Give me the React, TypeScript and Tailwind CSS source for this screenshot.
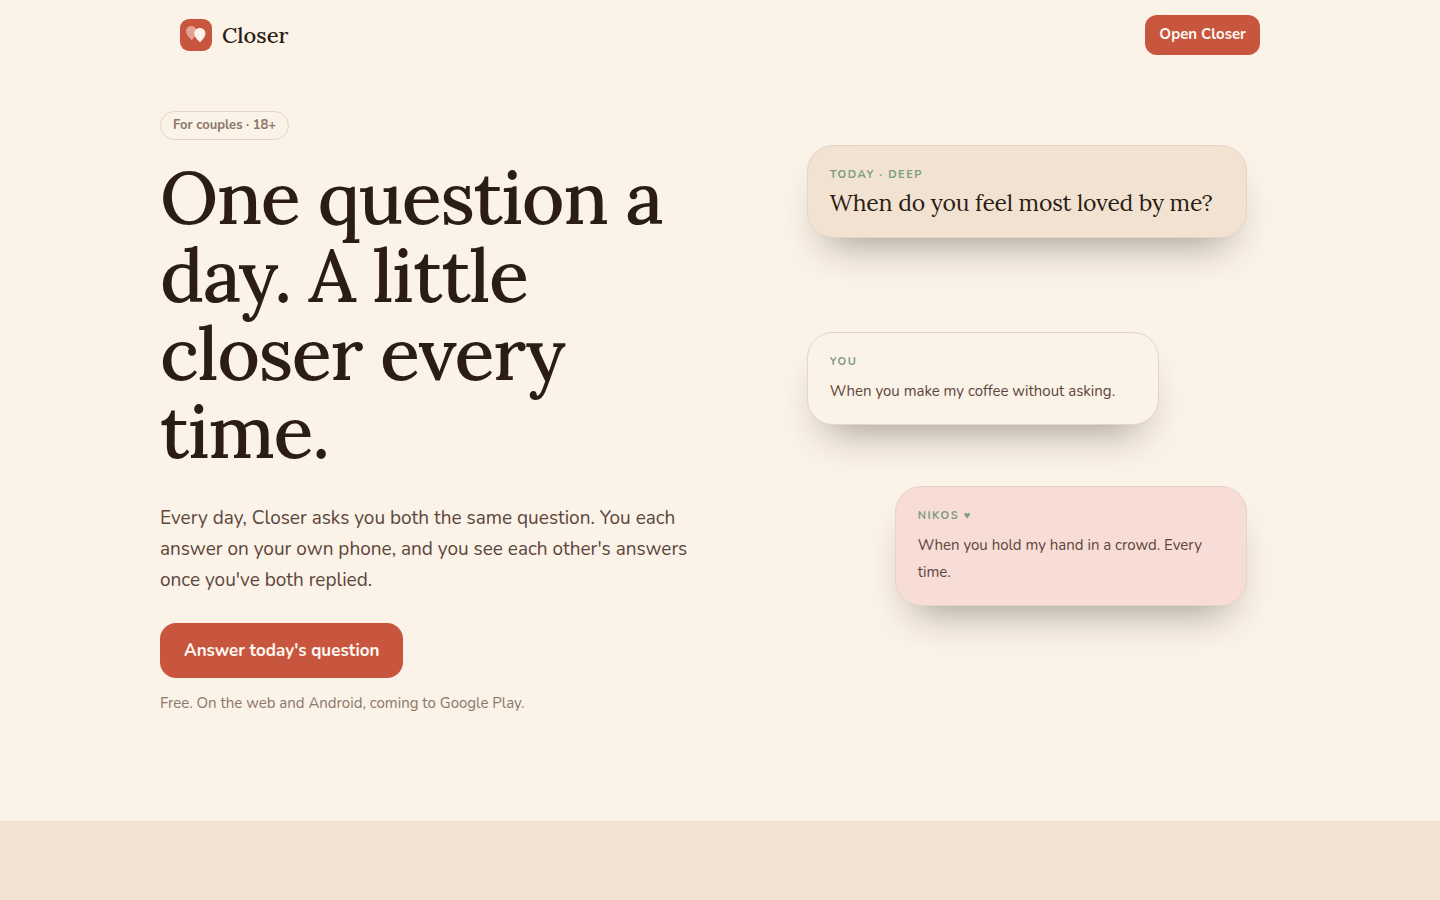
import React from 'react';
import clsx from 'clsx';

interface ChatCardProps {
  label: string;
  className?: string;
  children: React.ReactNode;
}

const Logo: React.FC = () => (
  <svg viewBox="0 0 32 32" className="w-8 h-8" aria-hidden="true">
    <rect width="32" height="32" rx="9" fill="#c8553d" />
    <path
      d="M11.3 7C14.3 7 16.6 9.3 16.6 12.2C16.6 15.7 13.9 18.8 11.8 21C9.2 18.8 6 15.6 6 12C6 9.2 8.4 7 11.3 7Z"
      fill="#fbf2e8"
      fillOpacity="0.5"
    />
    <path
      d="M19.8 9C22.9 9 25.4 11.3 25.4 14.3C25.4 17.9 22.4 21 20 23.3C17.4 21 14.2 17.9 14.2 14.3C14.2 11.3 16.7 9 19.8 9Z"
      fill="#fbf2e8"
    />
  </svg>
);

const ChatCard: React.FC<ChatCardProps> = ({ label, className, children }) => (
  <article
    className={clsx(
      'rounded-[26px] border border-[#e3d6c6] px-[22px] pt-[21px] pb-[19px] shadow-[0_24px_40px_-20px_rgba(43,33,22,0.45)]',
      className,
    )}
  >
    <p className="text-[11px] leading-4 font-bold tracking-[0.14em] uppercase text-[#7d9c82]">{label}</p>
    {children}
  </article>
);

const App: React.FC = () => {
  return (
    <div className="min-h-screen flex flex-col bg-[#fbf2e8] text-[#2b1d14] font-[Nunito,Lato,sans-serif]">
      <header className="w-full max-w-[1120px] mx-auto px-5 py-[15px] flex items-center justify-between">
        <a href="#" className="flex items-center gap-2.5">
          <Logo />
          <span className="font-[Lora,'Liberation_Serif',serif] text-[22px] leading-8 font-medium">Closer</span>
        </a>
        <button className="h-10 px-3.5 pb-0.5 rounded-xl bg-[#c8553d] text-[#fff8f2] text-[15px] font-bold">
          Open Closer
        </button>
      </header>

      <main className="flex-1 flex flex-col">
        <section className="w-full max-w-[1120px] mx-auto pt-[41px] pb-[108px] grid lg:grid-cols-[1.1fr_1fr] gap-14 items-start">
          <div className="flex flex-col items-start">
            <span className="px-3 py-1 rounded-full border border-[#e3d6c6] text-[13px] leading-[19px] font-bold text-[#8c7768]">
              For couples · 18+
            </span>
            <h1 className="mt-[18px] font-[Lora,'Liberation_Serif',serif] text-[74px] leading-[78px] font-medium tracking-[-0.02em]">
              One question a day. A little closer every time.
            </h1>
            <p className="mt-[33px] text-[19px] leading-[31px] text-[#5c463b]">
              Every day, Closer asks you both the same question. You each answer on your own phone, and you see
              each other's answers once you've both replied.
            </p>
            <button className="mt-[27px] h-[55px] px-6 rounded-2xl bg-[#c8553d] text-[#fff8f2] text-[17px] font-bold">
              Answer today's question
            </button>
            <p className="mt-[15px] text-[15px] leading-5 text-[#8c7768]">
              Free. On the web and Android, coming to Google Play.
            </p>
          </div>

          <div className="w-full max-w-[440px] mx-auto pt-[34px] flex flex-col">
            <ChatCard label="Today · Deep" className="bg-[#f2e2d2]">
              <h2 className="mt-[5px] font-[Lora,'Liberation_Serif',serif] text-[23px] leading-[30px] tracking-[-0.01em]">
                When do you feel most loved by me?
              </h2>
            </ChatCard>
            <ChatCard label="You" className="mt-[94px] w-4/5 bg-[#fbf2e8]">
              <p className="mt-2 text-[15px] leading-[27px] text-[#5c463b]">When you make my coffee without asking.</p>
            </ChatCard>
            <ChatCard label="Nikos ♥" className="mt-[61px] w-4/5 self-end bg-[#f8dcd6]">
              <p className="mt-2 text-[15px] leading-[27px] text-[#5c463b]">
                When you hold my hand in a crowd. Every time.
              </p>
            </ChatCard>
          </div>
        </section>

        <section className="flex-1 bg-[#f2e2d2]" />
      </main>
    </div>
  );
};

export default App;
